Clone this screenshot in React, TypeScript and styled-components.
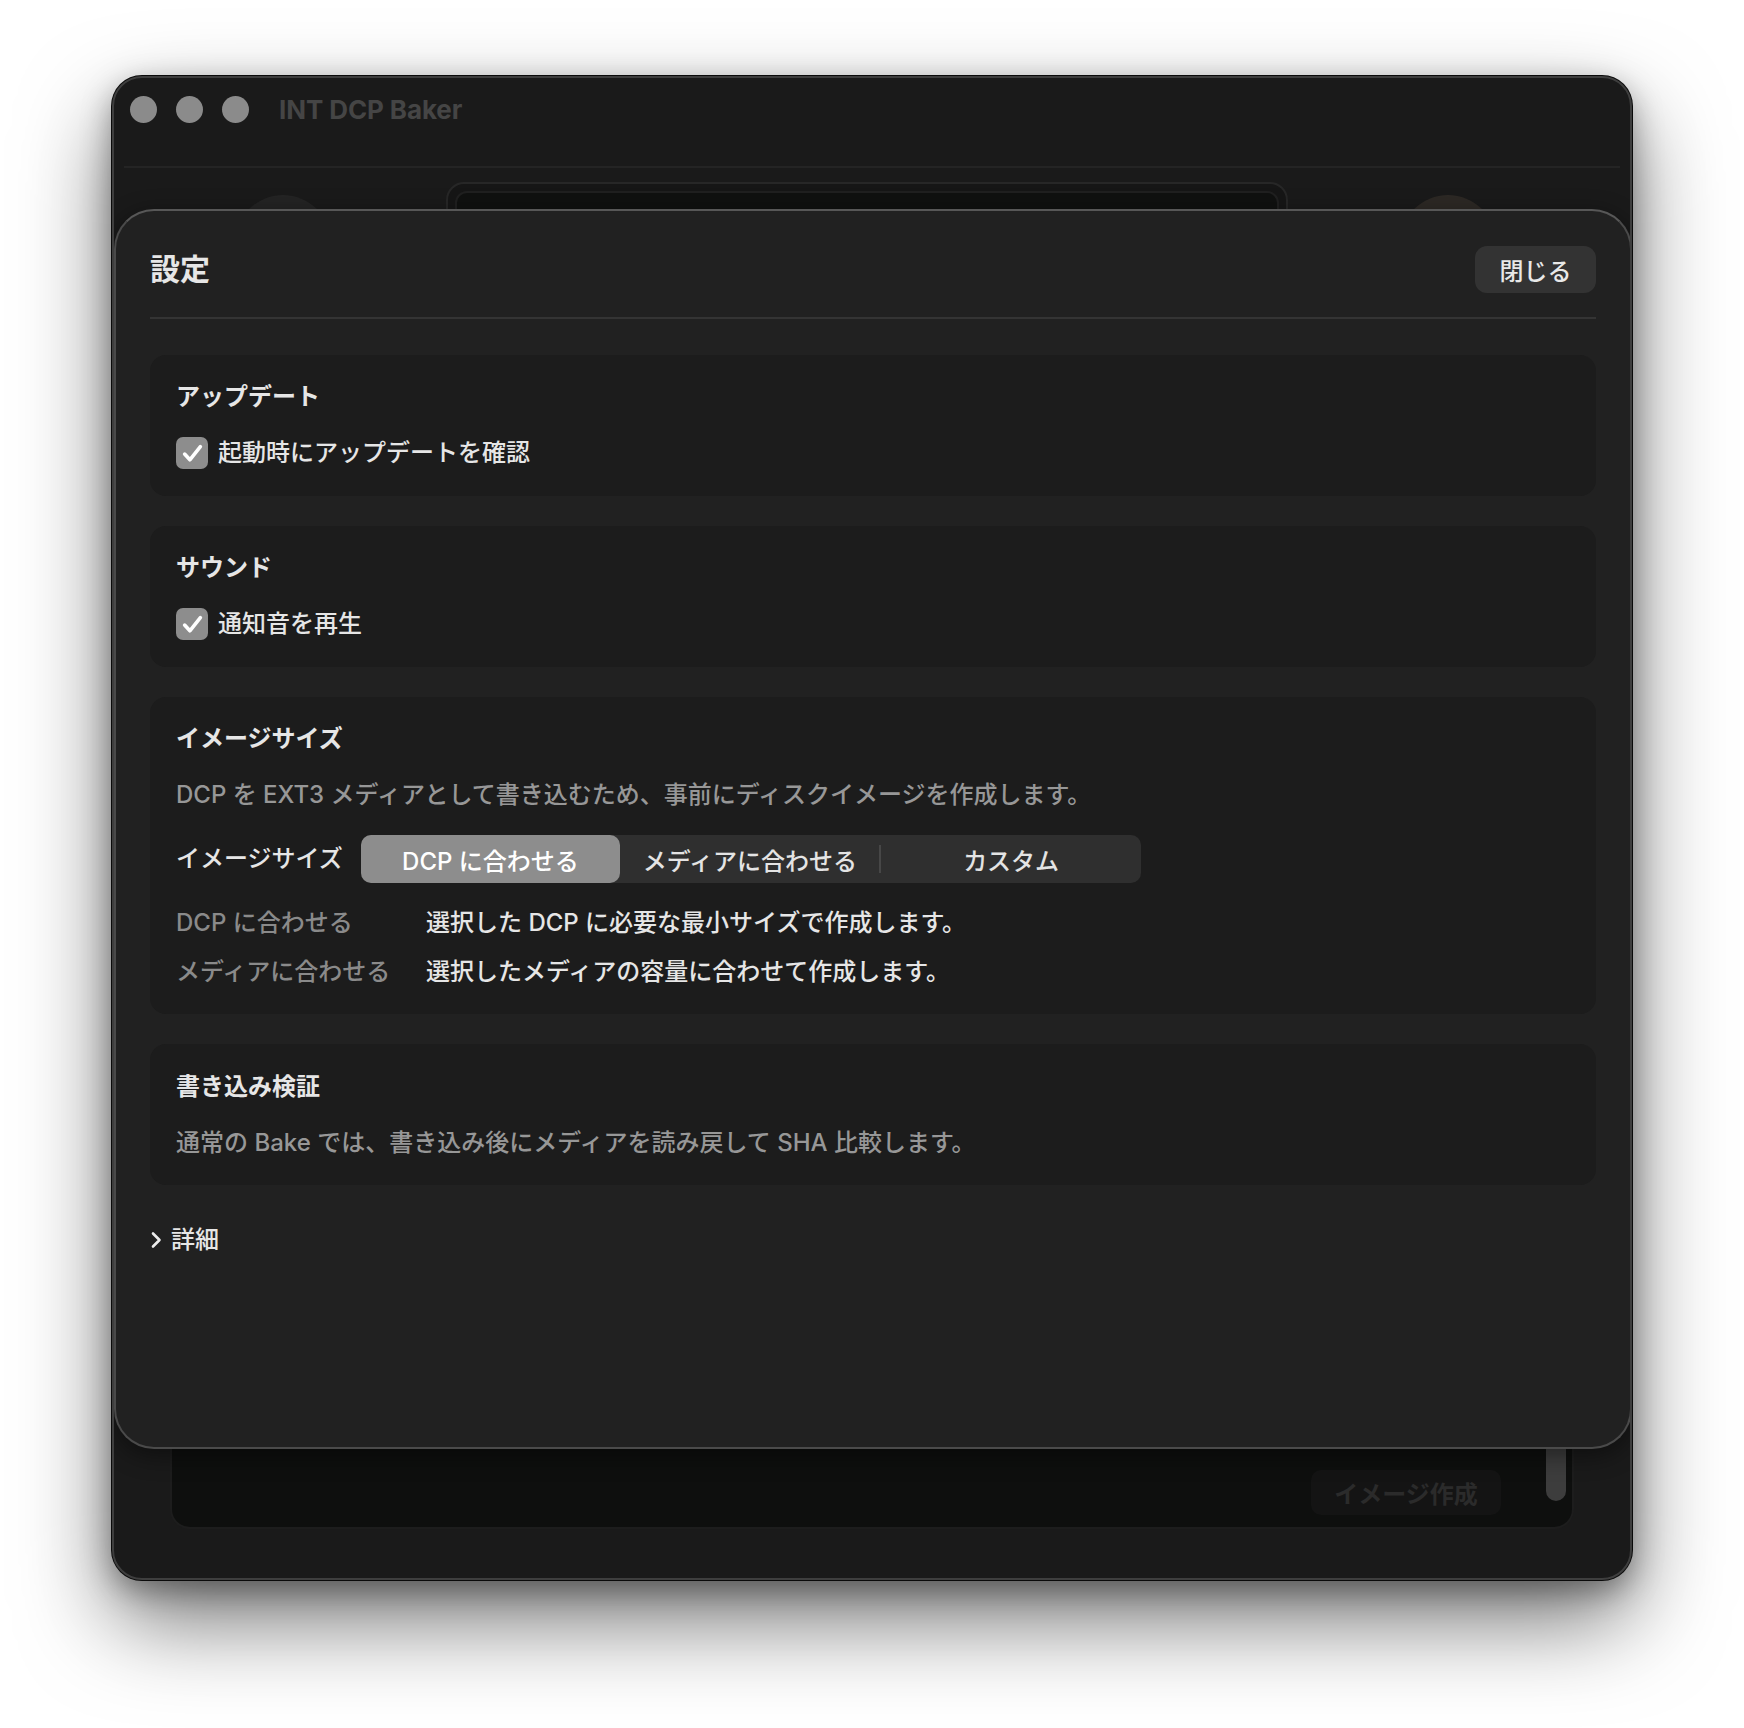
import styled, { createGlobalStyle } from 'styled-components';

const GlobalStyle = createGlobalStyle`
  html, body {
    margin: 0;
    padding: 0;
    background: #ffffff;
  }
  body {
    font-family: Inter, "Noto Sans CJK JP", sans-serif;
    -webkit-font-smoothing: antialiased;
  }
`;

const Check = () => (
  <svg width="21" height="19" viewBox="0 0 20 18" fill="none">
    <path
      d="M2.5 9.5 L7.5 15 L17.5 2.5"
      stroke="#ffffff"
      strokeWidth="3.4"
      strokeLinecap="round"
      strokeLinejoin="round"
    />
  </svg>
);

const Chevron = () => (
  <svg width="12" height="18" viewBox="0 0 12 18" fill="none">
    <path
      d="M3 2.5 L9.5 9 L3 15.5"
      stroke="#ececec"
      strokeWidth="2.6"
      strokeLinecap="round"
      strokeLinejoin="round"
    />
  </svg>
);

const App = () => {
  return (
    <>
      <GlobalStyle />
      <Page>
        <Window>
          <TitleBar>
            <Lights>
              <Light />
              <Light />
              <Light />
            </Lights>
            <AppTitle>INT DCP Baker</AppTitle>
          </TitleBar>

          <MainArea>
            <TopStrip>
              <Knob />
              <Display>
                <DisplayInner />
              </Display>
              <Knob $warm />
            </TopStrip>
            <BottomPanel>
              <GhostButton>イメージ作成</GhostButton>
              <ScrollThumb />
            </BottomPanel>
          </MainArea>

          <Sheet>
            <SheetHeader>
              <SheetTitle>設定</SheetTitle>
              <CloseButton>閉じる</CloseButton>
            </SheetHeader>

            <Sections>
              <Card>
                <CardTitle>アップデート</CardTitle>
                <CheckRow>
                  <CheckBox>
                    <Check />
                  </CheckBox>
                  <RowText>起動時にアップデートを確認</RowText>
                </CheckRow>
              </Card>

              <Card>
                <CardTitle>サウンド</CardTitle>
                <CheckRow>
                  <CheckBox>
                    <Check />
                  </CheckBox>
                  <RowText>通知音を再生</RowText>
                </CheckRow>
              </Card>

              <Card>
                <CardTitle>イメージサイズ</CardTitle>
                <Description>
                  DCP を EXT3 メディアとして書き込むため、事前にディスクイメージを作成します。
                </Description>
                <SegmentRow>
                  <RowText>イメージサイズ</RowText>
                  <Segmented>
                    <Segment $active>DCP に合わせる</Segment>
                    <Segment>メディアに合わせる</Segment>
                    <SegDivider />
                    <Segment>カスタム</Segment>
                  </Segmented>
                </SegmentRow>
                <InfoList>
                  <InfoRow>
                    <InfoLabel>DCP に合わせる</InfoLabel>
                    <RowText>選択した DCP に必要な最小サイズで作成します。</RowText>
                  </InfoRow>
                  <InfoRow>
                    <InfoLabel>メディアに合わせる</InfoLabel>
                    <RowText>選択したメディアの容量に合わせて作成します。</RowText>
                  </InfoRow>
                </InfoList>
              </Card>

              <Card $tight>
                <CardTitle>書き込み検証</CardTitle>
                <Description>
                  通常の Bake では、書き込み後にメディアを読み戻して SHA 比較します。
                </Description>
              </Card>
            </Sections>

            <Disclosure>
              <Chevron />
              <DisclosureText>詳細</DisclosureText>
            </Disclosure>
          </Sheet>
        </Window>
      </Page>
    </>
  );
};

export default App;

const Page = styled.div`
  width: 1744px;
  height: 1728px;
  padding: 76px 0 0 112px;
  box-sizing: border-box;
`;

const Window = styled.div`
  position: relative;
  width: 1520px;
  height: 1504px;
  box-sizing: border-box;
  background: #1a1a1a;
  border: 2px solid #3e3e3e;
  border-radius: 30px;
  box-shadow: 0 0 0 1px #0a0a0a, 0 40px 90px rgba(0, 0, 0, 0.55),
    0 10px 30px rgba(0, 0, 0, 0.35);
  display: flex;
  flex-direction: column;
  overflow: hidden;
`;

const TitleBar = styled.div`
  flex: none;
  height: 90px;
  margin: 0 10px;
  padding: 18px 0 0 6px;
  box-sizing: border-box;
  border-bottom: 2px solid #242424;
  display: flex;
  align-items: flex-start;
  gap: 30px;
`;

const Lights = styled.div`
  display: flex;
  gap: 19px;
  height: 27px;
  align-items: center;
`;

const Light = styled.div`
  width: 27px;
  height: 27px;
  border-radius: 50%;
  background: #8b8b8b;
`;

const AppTitle = styled.div`
  height: 27px;
  line-height: 27px;
  font-size: 26px;
  font-weight: 700;
  color: #454545;
  letter-spacing: -0.1px;
`;

const MainArea = styled.div`
  flex: 1;
  display: flex;
  flex-direction: column;
  justify-content: space-between;
  padding: 14px 56px 49px;
`;

const TopStrip = styled.div`
  display: flex;
  align-items: flex-start;
`;

const Knob = styled.div<{ $warm?: boolean }>`
  width: 96px;
  height: 96px;
  margin: 13px 0 0 ${(p) => (p.$warm ? '112px' : '65px')};
  border-radius: 50%;
  background: ${(p) => (p.$warm ? '#2d2925' : '#242424')};
`;

const Display = styled.div`
  width: 842px;
  height: 120px;
  margin-left: 115px;
  padding: 7px;
  box-sizing: border-box;
  border: 2px solid #272727;
  border-radius: 18px;
  background: #161616;
`;

const DisplayInner = styled.div`
  height: 100%;
  border: 2px solid #202020;
  border-radius: 12px;
  background: #101110;
`;

const BottomPanel = styled.div`
  position: relative;
  height: 260px;
  box-sizing: border-box;
  background: #0e0f0e;
  border: 2px solid #1d1d1d;
  border-radius: 20px;
  display: flex;
  align-items: flex-end;
  justify-content: flex-end;
  padding: 0 71px 12px 0;
`;

const GhostButton = styled.div`
  width: 190px;
  height: 45px;
  border-radius: 10px;
  background: #141414;
  color: #2b2b2b;
  font-size: 24px;
  font-weight: 700;
  display: flex;
  align-items: center;
  justify-content: center;
`;

const ScrollThumb = styled.div`
  position: absolute;
  right: 6px;
  bottom: 26px;
  width: 20px;
  height: 80px;
  border-radius: 10px;
  background: #3d3d3d;
`;

const Sheet = styled.div`
  position: absolute;
  top: 131px;
  left: 0;
  width: 1518px;
  height: 1240px;
  box-sizing: border-box;
  background: #212121;
  border: 2px solid #4a4a4a;
  border-top-color: #575757;
  border-radius: 40px;
  box-shadow: 0 6px 24px rgba(0, 0, 0, 0.45);
  padding: 0 34px;
  display: flex;
  flex-direction: column;
`;

const SheetHeader = styled.div`
  height: 108px;
  padding-top: 35px;
  box-sizing: border-box;
  border-bottom: 2px solid #343434;
  display: flex;
  align-items: flex-start;
  justify-content: space-between;
`;

const SheetTitle = styled.div`
  height: 47px;
  line-height: 47px;
  font-size: 30px;
  font-weight: 700;
  color: #e6e6e6;
`;

const CloseButton = styled.div`
  width: 121px;
  height: 47px;
  border-radius: 12px;
  background: #333333;
  color: #e8e8e8;
  font-size: 24px;
  font-weight: 500;
  display: flex;
  align-items: center;
  justify-content: center;
`;

const Sections = styled.div`
  margin-top: 36px;
  display: flex;
  flex-direction: column;
  gap: 30px;
`;

const Card = styled.div<{ $tight?: boolean }>`
  background: #1c1c1c;
  border-radius: 16px;
  padding: ${(p) => (p.$tight ? '27px' : '26px')} 26px 26px;
  display: flex;
  flex-direction: column;
  gap: 24px;
`;

const CardTitle = styled.div`
  height: 32px;
  line-height: 32px;
  font-size: 24px;
  font-weight: 700;
  color: #e6e6e6;
`;

const CheckRow = styled.div`
  display: flex;
  align-items: center;
  gap: 10px;
  padding-bottom: 1px;
`;

const CheckBox = styled.div`
  width: 32px;
  height: 32px;
  border-radius: 7px;
  background: #8d8d8d;
  display: flex;
  align-items: center;
  justify-content: center;
`;

const RowText = styled.div`
  font-size: 24px;
  line-height: 32px;
  font-weight: 500;
  color: #e6e6e6;
  white-space: nowrap;
`;

const Description = styled.div`
  font-size: 24px;
  line-height: 32px;
  font-weight: 500;
  color: #979797;
`;

const SegmentRow = styled.div`
  display: flex;
  align-items: center;
  gap: 18px;
`;

const Segmented = styled.div`
  width: 780px;
  height: 48px;
  border-radius: 10px;
  background: #2f2f2f;
  display: flex;
  align-items: center;
`;

const Segment = styled.div<{ $active?: boolean }>`
  flex: 1;
  height: 100%;
  border-radius: 10px;
  background: ${(p) => (p.$active ? '#8d8d8d' : 'transparent')};
  color: ${(p) => (p.$active ? '#ffffff' : '#e4e4e4')};
  font-size: 24px;
  font-weight: 500;
  display: flex;
  align-items: center;
  justify-content: center;
`;

const SegDivider = styled.div`
  width: 2px;
  height: 28px;
  background: #474747;
`;

const InfoList = styled.div`
  display: flex;
  flex-direction: column;
  gap: 17px;
`;

const InfoRow = styled.div`
  display: flex;
  align-items: center;
`;

const InfoLabel = styled.div`
  width: 250px;
  flex: none;
  font-size: 24px;
  line-height: 32px;
  font-weight: 500;
  color: #8a8a8a;
`;

const Disclosure = styled.div`
  margin-top: 39px;
  display: flex;
  align-items: center;
  gap: 9px;
`;

const DisclosureText = styled.div`
  font-size: 24px;
  line-height: 32px;
  font-weight: 500;
  color: #e6e6e6;
`;
